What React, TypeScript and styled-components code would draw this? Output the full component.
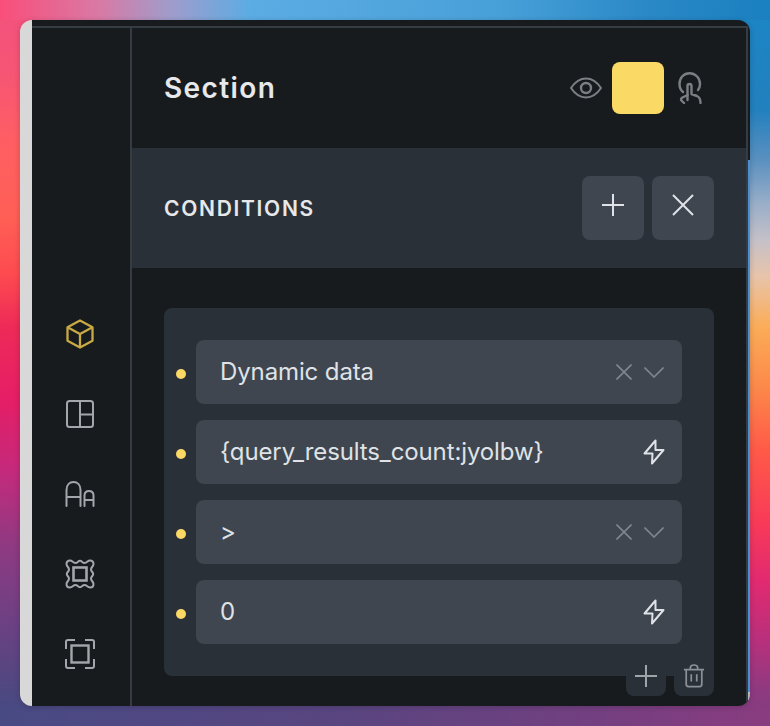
import React from 'react'
import styled, { createGlobalStyle } from 'styled-components'

const GlobalStyle = createGlobalStyle`
  html, body {
    margin: 0;
    padding: 0;
    background: #000;
  }

  * {
    box-sizing: border-box;
  }
`

type Condition = {
  text: string
  kind: 'select' | 'input'
}

const conditions: Condition[] = [
  { text: 'Dynamic data', kind: 'select' },
  { text: '{query_results_count:jyolbw}', kind: 'input' },
  { text: '>', kind: 'select' },
  { text: '0', kind: 'input' },
]

const CubeIcon = () => (
  <svg width="28" height="30" viewBox="0 0 28 30" fill="none" stroke="currentColor" strokeWidth="2.3" strokeLinejoin="round">
    <path d="M14 1.5 L26.5 8.3 V21.7 L14 28.5 L1.5 21.7 V8.3 Z" />
    <path d="M1.5 8.3 L14 15 L26.5 8.3 M14 15 V28.5" />
  </svg>
)

const LayoutIcon = () => (
  <svg width="28" height="28" viewBox="0 0 28 28" fill="none" stroke="currentColor" strokeWidth="2" strokeLinejoin="round">
    <rect x="1" y="1" width="26" height="26" rx="2.5" />
    <path d="M14 1 V27 M14 14.5 H27" />
  </svg>
)

const TypeIcon = () => (
  <svg width="30" height="26" viewBox="0 0 30 26" fill="none" stroke="currentColor" strokeWidth="2" strokeLinecap="round">
    <path d="M1.5 25 V9 C1.5 4 4.5 1 8.5 1 C12.5 1 15.5 4 15.5 9 V25 M1.5 16 H15.5" />
    <path d="M19.5 25 V14.5 C19.5 11.5 21.2 10 24 10 C26.8 10 28.5 11.5 28.5 14.5 V25 M19.5 19 H28.5" />
  </svg>
)

const BorderIcon = () => (
  <svg width="30" height="30" viewBox="0 0 30 30" fill="none" stroke="currentColor" strokeWidth="2">
    <rect x="8.5" y="8.5" width="13" height="13" strokeWidth="2.6" />
    <path d="M5 1.5 C7.5 1.5 8 4 10.5 4 C12.5 4 13 1.8 15 1.8 C17 1.8 17.5 4 19.5 4 C22 4 22.5 1.5 25 1.5 C27 1.5 28.5 3 28.5 5 C28.5 7.5 26 8 26 10.5 C26 12.5 28.2 13 28.2 15 C28.2 17 26 17.5 26 19.5 C26 22 28.5 22.5 28.5 25 C28.5 27 27 28.5 25 28.5 C22.5 28.5 22 26 19.5 26 C17.5 26 17 28.2 15 28.2 C13 28.2 12.5 26 10.5 26 C8 26 7.5 28.5 5 28.5 C3 28.5 1.5 27 1.5 25 C1.5 22.5 4 22 4 19.5 C4 17.5 1.8 17 1.8 15 C1.8 13 4 12.5 4 10.5 C4 8 1.5 7.5 1.5 5 C1.5 3 3 1.5 5 1.5 Z" />
  </svg>
)

const SpacingIcon = () => (
  <svg width="30" height="30" viewBox="0 0 30 30" fill="none" stroke="currentColor" strokeWidth="2">
    <rect x="6.5" y="6.5" width="17" height="17" strokeWidth="2.4" />
    <path d="M1 10 V3 C1 2 2 1 3 1 H10 M20 1 H27 C28 1 29 2 29 3 V10 M29 20 V27 C29 28 28 29 27 29 H20 M10 29 H3 C2 29 1 28 1 27 V20" />
  </svg>
)

const EyeIcon = () => (
  <svg width="32" height="22" viewBox="0 0 32 22" fill="none" stroke="currentColor" strokeWidth="2">
    <path d="M1 11 C5 5 10 1.5 16 1.5 C22 1.5 27 5 31 11 C27 17 22 20.5 16 20.5 C10 20.5 5 17 1 11 Z" />
    <circle cx="16" cy="11" r="5" strokeWidth="2.4" />
  </svg>
)

const TouchIcon = () => (
  <svg width="24" height="32" viewBox="0 0 24 32" fill="none" stroke="currentColor" strokeWidth="2.4" strokeLinecap="round" strokeLinejoin="round">
    <path d="M5 20 C2.5 18 1.5 15.5 1.5 12 C1.5 5.8 5.8 1.2 11.5 1.2 C17.2 1.2 22 5.8 22 12 C22 14.5 21.2 16.5 20 18" />
    <path d="M6 31 L3.5 28.5 C2.8 27.6 3 26.4 4 25.8 L9.5 23 V14 C9.5 12.6 10.4 12 11.5 12 C12.6 12 13.5 12.6 13.5 14 V22 L19 24 C21.5 25 22.5 27 22.5 31" />
    <path d="M9.5 23 L9.5 28" />
  </svg>
)

const PlusIcon = () => (
  <svg width="24" height="24" viewBox="0 0 24 24" stroke="currentColor" strokeWidth="2">
    <path d="M12 1 V23 M1 12 H23" />
  </svg>
)

const CloseIcon = () => (
  <svg width="24" height="24" viewBox="0 0 24 24" stroke="currentColor" strokeWidth="2">
    <path d="M2 2 L22 22 M22 2 L2 22" />
  </svg>
)

const SmallCloseIcon = () => (
  <svg width="16" height="16" viewBox="0 0 16 16" stroke="currentColor" strokeWidth="1.6">
    <path d="M0.5 0.5 L15.5 15.5 M15.5 0.5 L0.5 15.5" />
  </svg>
)

const ChevronIcon = () => (
  <svg width="20" height="11" viewBox="0 0 20 11" fill="none" stroke="currentColor" strokeWidth="1.6">
    <path d="M0.5 0.5 L10 10 L19.5 0.5" />
  </svg>
)

const BoltIcon = () => (
  <svg width="22" height="26" viewBox="0 0 22 26" fill="none" stroke="currentColor" strokeWidth="2" strokeLinejoin="round">
    <path d="M12.5 1.5 L1.5 14.5 H9.5 L9 24.5 L20.5 11 H12.5 Z" />
  </svg>
)

const TrashIcon = () => (
  <svg width="22" height="24" viewBox="0 0 24 26" fill="none" stroke="currentColor" strokeWidth="1.9">
    <path d="M1 6 H23 M8 6 V4 C8 2 9.5 1 12 1 C14.5 1 16 2 16 4 V6" />
    <path d="M3.5 6 V22 C3.5 24 4.5 24.5 6 24.5 H18 C19.5 24.5 20.5 24 20.5 22 V6" />
    <path d="M9 11 V19 M15 11 V19" />
  </svg>
)

export default function App() {
  return (
    <>
      <GlobalStyle />
      <Wallpaper>
        <Window>
          <LeftStrip />
          <Body>
            <TopLine />
            <Columns>
              <Rail>
                <RailItem $active><CubeIcon /></RailItem>
                <RailItem><LayoutIcon /></RailItem>
                <RailItem><TypeIcon /></RailItem>
                <RailItem><BorderIcon /></RailItem>
                <RailItem><SpacingIcon /></RailItem>
              </Rail>
              <Panel>
                <Header>
                  <Title>Section</Title>
                  <HeaderActions>
                    <EyeButton><EyeIcon /></EyeButton>
                    <Swatch />
                    <TouchButton><TouchIcon /></TouchButton>
                  </HeaderActions>
                </Header>
                <Band>
                  <BandTitle>CONDITIONS</BandTitle>
                  <BandActions>
                    <BandButton><PlusIcon /></BandButton>
                    <BandButton><CloseIcon /></BandButton>
                  </BandActions>
                </Band>
                <Content>
                  <Card>
                    {conditions.map((c) => (
                      <Row key={c.text}>
                        <Dot />
                        <Field>
                          <FieldText>{c.text}</FieldText>
                          {c.kind === 'select' ? (
                            <SelectIcons>
                              <SmallCloseIcon />
                              <ChevronIcon />
                            </SelectIcons>
                          ) : (
                            <BoltWrap><BoltIcon /></BoltWrap>
                          )}
                        </Field>
                      </Row>
                    ))}
                    <CardActions>
                      <CardButton $tone="#a0a5ab"><PlusIcon /></CardButton>
                      <CardButton $tone="#8b9097"><TrashIcon /></CardButton>
                    </CardActions>
                  </Card>
                </Content>
              </Panel>
              <EdgeLine />
            </Columns>
          </Body>
          <RightEdge />
        </Window>
      </Wallpaper>
    </>
  )
}

const Wallpaper = styled.div`
  width: 770px;
  height: 726px;
  padding: 20px;
  overflow: hidden;
  font-family: Inter, 'Liberation Sans', sans-serif;
  background:
    linear-gradient(90deg, #fa4e7a 0, #d87aa5 100px, #a09ccb 170px, #5cace4 250px, #48a0d8 500px, #2a88c6 650px, #1a80c0 770px) 0 0 / 100% 20px no-repeat,
    linear-gradient(90deg, #484a84 0, #5a4580 350px, #743f80 600px, #8a3c80 770px) 0 100% / 100% 20px no-repeat,
    linear-gradient(180deg, #f2527e 0, #f65575 70px, #ff5f62 145px, #ff5f55 218px, #fd4a50 275px, #ee2a58 327px, #e51e66 400px, #c42a7c 472px, #8f3a82 545px, #6f4083 617px, #4f4880 690px, #454a85 726px) 0 0 / 40px 100% no-repeat,
    linear-gradient(180deg, #1c86c6 0, #2280be 109px, #5a90c0 160px, #98aec8 203px, #c5c0c8 240px, #e8c4aa 276px, #fbac58 327px, #fc8a4a 385px, #ff5a48 450px, #f83a58 523px, #e22a70 580px, #b8307c 640px, #8f3a80 690px, #7e3e80 726px) 100% 0 / 40px 100% no-repeat,
    #2a3038;
`

const Window = styled.div`
  width: 730px;
  height: 686px;
  display: flex;
  border-radius: 12px;
  overflow: hidden;
  box-shadow: 0 1px 6px rgba(0, 0, 0, 0.18);
`

const LeftStrip = styled.div`
  width: 12px;
  background: #d8d8d8;
`

const Body = styled.div`
  width: 716px;
  display: flex;
  flex-direction: column;
  padding-top: 6px;
  background: #171b1e;
`

const TopLine = styled.div`
  height: 2px;
  flex-shrink: 0;
  background: #363c44;
`

const Columns = styled.div`
  flex: 1;
  min-height: 0;
  display: flex;
`

const Rail = styled.nav`
  width: 100px;
  display: flex;
  flex-direction: column;
  justify-content: flex-end;
  padding: 0 2px 12px 0;
  border-right: 2px solid #363c44;
`

const RailItem = styled.div<{ $active?: boolean }>`
  height: 80px;
  display: flex;
  align-items: center;
  justify-content: center;
  color: ${(p) => (p.$active ? '#c9a944' : '#a3a7ac')};
`

const Panel = styled.div`
  width: 614px;
  display: flex;
  flex-direction: column;
`

const Header = styled.header`
  height: 120px;
  flex-shrink: 0;
  display: flex;
  align-items: center;
  justify-content: space-between;
  padding: 0 44px 0 32px;
`

const Title = styled.h1`
  margin: 0;
  font-size: 28px;
  font-weight: 600;
  letter-spacing: 1.4px;
  color: #e6e8ea;
`

const HeaderActions = styled.div`
  display: flex;
  align-items: center;
`

const EyeButton = styled.div`
  width: 32px;
  height: 22px;
  margin-right: 10px;
  color: #7b7f83;
  display: flex;
`

const Swatch = styled.div`
  width: 52px;
  height: 52px;
  border-radius: 8px;
  background: #fbd965;
`

const TouchButton = styled.div`
  width: 24px;
  height: 32px;
  margin-left: 14px;
  color: #7b7f83;
  display: flex;
`

const Band = styled.section`
  height: 120px;
  flex-shrink: 0;
  display: flex;
  align-items: center;
  justify-content: space-between;
  padding: 0 32px;
  background: #2a3038;
`

const BandTitle = styled.h2`
  margin: 0;
  font-size: 21px;
  font-weight: 600;
  letter-spacing: 1.7px;
  color: #e6e8ea;
`

const BandActions = styled.div`
  display: flex;
  gap: 8px;
`

const BandButton = styled.button`
  width: 62px;
  height: 64px;
  padding: 0 0 6px;
  border: 0;
  border-radius: 8px;
  display: flex;
  align-items: center;
  justify-content: center;
  background: #3f4650;
  color: #dfe2e6;
`

const Content = styled.div`
  flex: 1;
  padding: 40px 32px 0;
`

const Card = styled.div`
  position: relative;
  height: 368px;
  padding: 32px 32px 32px 12px;
  display: flex;
  flex-direction: column;
  gap: 16px;
  border-radius: 8px;
  background: #2a3038;
`

const Row = styled.div`
  display: flex;
  align-items: center;
  gap: 10px;
`

const Dot = styled.span`
  width: 10px;
  height: 10px;
  flex-shrink: 0;
  margin-top: 4px;
  border-radius: 50%;
  background: #fbd965;
`

const Field = styled.div`
  flex: 1;
  height: 64px;
  display: flex;
  align-items: center;
  justify-content: space-between;
  padding: 0 18px 0 24px;
  border-radius: 8px;
  background: #3f4650;
`

const FieldText = styled.span`
  font-size: 24px;
  line-height: 64px;
  letter-spacing: -0.12px;
  color: #dfe2e6;
`

const SelectIcons = styled.div`
  display: flex;
  align-items: center;
  gap: 12px;
  color: #81868d;
`

const BoltWrap = styled.div`
  display: flex;
  margin-right: -1px;
  color: #dfe2e6;
`

const CardActions = styled.div`
  position: absolute;
  right: 0;
  bottom: -20px;
  display: flex;
  gap: 8px;
`

const CardButton = styled.button<{ $tone: string }>`
  width: 40px;
  height: 40px;
  padding: 0;
  border: 0;
  border-radius: 8px;
  display: flex;
  align-items: center;
  justify-content: center;
  background: #2a3038;
  color: ${(p) => p.$tone};
`

const EdgeLine = styled.div`
  width: 2px;
  background: #363c44;
`

const RightEdge = styled.div`
  width: 2px;
  background: linear-gradient(180deg, #171b1e 0 140px, #4a90d0 140px 672px, #b8b8b8 672px);
`
